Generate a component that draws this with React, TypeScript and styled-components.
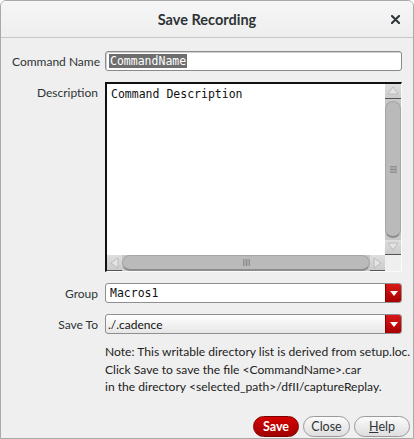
import React from "react";
import styled, { createGlobalStyle } from "styled-components";

const Global = createGlobalStyle`
  html, body { margin: 0; padding: 0; background: #ffffff; }
  body { font-family: Lato, "Open Sans", sans-serif; }
  * { box-sizing: border-box; }
`;

const Window = styled.div`
  width: 414px;
  height: 439px;
  border: 1px solid #a9a9a9;
  border-radius: 6px 6px 0 0;
  background: #efefef;
  display: flex;
  flex-direction: column;
  overflow: hidden;
`;

const TitleBar = styled.div`
  height: 37px;
  flex: none;
  position: relative;
  display: flex;
  align-items: center;
  justify-content: center;
  background: linear-gradient(#f6f6f6, #eeeeee);
  border-bottom: 1px solid #c6c6c6;
  font-size: 14.5px;
  font-weight: 700;
  color: #2e3436;
`;

const CloseX = styled.span`
  position: absolute;
  right: 13px;
  top: 14px;
  display: flex;
`;

const Body = styled.div`
  flex: 1;
  display: flex;
  flex-direction: column;
  padding: 13px 11px 0 11px;
`;

const Form = styled.div`
  display: grid;
  grid-template-columns: 86px 297px;
  column-gap: 7px;
  row-gap: 11px;
  align-items: center;
`;

const Label = styled.div<{ $top?: boolean }>`
  font-size: 12px;
  color: #2e3436;
  text-align: right;
  align-self: ${(p) => (p.$top ? "start" : "center")};
  padding-top: ${(p) => (p.$top ? "3px" : "0")};
  white-space: nowrap;
`;

const TextInput = styled.div`
  height: 20px;
  border: 1px solid #8a8a8a;
  border-radius: 3px;
  background: #fff;
  box-shadow: inset 1px 1px 0 #d0d0d0;
  display: flex;
  align-items: center;
  padding-left: 3px;
`;

const Selected = styled.span`
  background: #6e6e6e;
  color: #fff;
  font-family: "DejaVu Sans Mono", monospace;
  font-size: 11.5px;
  line-height: 14px;
  padding: 0 1px;
`;

const TextAreaBox = styled.div`
  height: 190px;
  border-top: 2px solid #111;
  border-left: 2px solid #111;
  border-right: 1px solid #fafafa;
  border-bottom: 1px solid #fafafa;
  background: #fff;
  display: grid;
  grid-template-columns: 1fr 16px;
  grid-template-rows: 1fr 16px;
`;

const TextContent = styled.div`
  font-family: "DejaVu Sans Mono", monospace;
  font-size: 11.5px;
  color: #111;
  padding: 3px 0 0 4px;
`;

const VScroll = styled.div`
  display: flex;
  flex-direction: column;
  background: #c7c7c7;
`;

const HScroll = styled.div`
  display: flex;
  flex-direction: row;
  background: #c7c7c7;
`;

const Corner = styled.div`
  background: #efefef;
`;

const ArrowBtn = styled.div<{ $h?: boolean }>`
  flex: none;
  width: ${(p) => (p.$h ? "15px" : "16px")};
  height: ${(p) => (p.$h ? "16px" : "15px")};
  background: linear-gradient(#dedede, #cbcbcb);
  border-bottom: 1px solid #555;
  display: flex;
  align-items: center;
  justify-content: center;
`;

const VThumb = styled.div`
  flex: 1;
  margin: 2px 0;
  border-radius: 8px;
  background: #bababa;
  border: 1px solid #a6a6a6;
  border-bottom: 2px solid #8c8c8c;
  display: flex;
  align-items: center;
  justify-content: center;
`;

const HThumb = styled.div`
  flex: 1;
  border-radius: 8px;
  background: #bababa;
  border: 1px solid #a6a6a6;
  border-bottom: 2px solid #8c8c8c;
  display: flex;
  align-items: center;
  justify-content: center;
`;

const Combo = styled.div<{ $grad?: boolean }>`
  height: 20px;
  border: 1px solid #8f8f8f;
  border-radius: 3px;
  background: ${(p) => (p.$grad ? "linear-gradient(#ffffff, #e6e6e6)" : "#fff")};
  display: flex;
  align-items: stretch;
  overflow: hidden;
`;

const ComboText = styled.div<{ $mono?: boolean }>`
  flex: 1;
  display: flex;
  align-items: center;
  padding-left: ${(p) => (p.$mono ? "4px" : "2px")};
  font-family: ${(p) => (p.$mono ? `"DejaVu Sans Mono", monospace` : `Lato, sans-serif`)};
  font-size: ${(p) => (p.$mono ? "11.5px" : "12px")};
  color: #111;
`;

const ComboBtn = styled.div`
  width: 16px;
  flex: none;
  background: linear-gradient(#d81818, #a80000);
  border-left: 1px solid #8a0000;
  display: flex;
  align-items: center;
  justify-content: center;
`;

const Note = styled.div`
  margin: 9px 0 0 93px;
  font-size: 12.1px;
  line-height: 17.5px;
  color: #222;
  white-space: nowrap;
`;

const ButtonRow = styled.div`
  margin-top: auto;
  display: flex;
  justify-content: flex-end;
  align-items: flex-start;
  gap: 4px;
  height: 22px;
  margin-right: -8px;
`;

const Btn = styled.div<{ $primary?: boolean; $w: number }>`
  width: ${(p) => p.$w}px;
  height: 21px;
  border-radius: 11px;
  display: flex;
  align-items: center;
  justify-content: center;
  font-size: 12.5px;
  font-weight: ${(p) => (p.$primary ? 700 : 400)};
  color: ${(p) => (p.$primary ? "#fff" : "#2e3436")};
  background: ${(p) =>
    p.$primary ? "linear-gradient(#d40000, #a20000)" : "linear-gradient(#fbfbfb, #dedede)"};
  border: 1px solid ${(p) => (p.$primary ? "#7a0000" : "#9a9a9a")};
`;

const Tri = ({ dir }: { dir: "up" | "down" | "left" | "right" }) => {
  const pts = {
    up: "1,9 6,2 11,9",
    down: "1,2 6,9 11,2",
    left: "9,1 2,6 9,11",
    right: "2,1 9,6 2,11",
  }[dir];
  return (
    <svg width="12" height="12" viewBox="0 0 12 12">
      <polygon points={pts} fill="#e4e4e4" stroke="#b4b4b4" strokeWidth="0.8" />
    </svg>
  );
};

const Grip = ({ vertical }: { vertical?: boolean }) => (
  <svg width={7} height={7} viewBox="0 0 7 7">
    {[0, 1.5, 3, 4.5, 6].map((v) =>
      vertical ? (
        <line key={v} x1="0" x2="7" y1={v + 0.5} y2={v + 0.5} stroke="#7e7e7e" strokeWidth="0.7" />
      ) : (
        <line key={v} y1="0" y2="7" x1={v + 0.5} x2={v + 0.5} stroke="#7e7e7e" strokeWidth="0.7" />
      )
    )}
  </svg>
);

const DownCaret = () => (
  <svg width="8" height="5" viewBox="0 0 8 5">
    <polygon points="0,0 8,0 4,5" fill="#fff" />
  </svg>
);

const XIcon = () => (
  <svg width="9" height="9" viewBox="0 0 9 9">
    <path d="M1 1 L8 8 M8 1 L1 8" stroke="#2e3436" strokeWidth="2.1" strokeLinecap="round" />
  </svg>
);

export default function App() {
  return (
    <>
      <Global />
      <Window>
        <TitleBar>
          Save Recording
          <CloseX>
            <XIcon />
          </CloseX>
        </TitleBar>
        <Body>
          <Form>
            <Label>Command Name</Label>
            <TextInput>
              <Selected>CommandName</Selected>
            </TextInput>

            <Label $top>Description</Label>
            <TextAreaBox>
              <TextContent>Command Description</TextContent>
              <VScroll>
                <ArrowBtn>
                  <Tri dir="up" />
                </ArrowBtn>
                <VThumb>
                  <Grip vertical />
                </VThumb>
                <ArrowBtn>
                  <Tri dir="down" />
                </ArrowBtn>
              </VScroll>
              <HScroll>
                <ArrowBtn $h>
                  <Tri dir="left" />
                </ArrowBtn>
                <HThumb>
                  <Grip />
                </HThumb>
                <ArrowBtn $h>
                  <Tri dir="right" />
                </ArrowBtn>
              </HScroll>
              <Corner />
            </TextAreaBox>

            <Label>Group</Label>
            <Combo>
              <ComboText $mono>Macros1</ComboText>
              <ComboBtn>
                <DownCaret />
              </ComboBtn>
            </Combo>

            <Label>Save To</Label>
            <Combo $grad>
              <ComboText>./.cadence</ComboText>
              <ComboBtn>
                <DownCaret />
              </ComboBtn>
            </Combo>
          </Form>
          <Note>
            Note: This writable directory list is derived from setup.loc.
            <br />
            Click Save to save the file &lt;CommandName&gt;.car
            <br />
            in the directory &lt;selected_path&gt;/dfII/captureReplay.
          </Note>
          <ButtonRow>
            <Btn $primary $w={46}>Save</Btn>
            <Btn $w={47}>Close</Btn>
            <Btn $w={56}>
              <span>
                <u>H</u>elp
              </span>
            </Btn>
          </ButtonRow>
        </Body>
      </Window>
    </>
  );
}
